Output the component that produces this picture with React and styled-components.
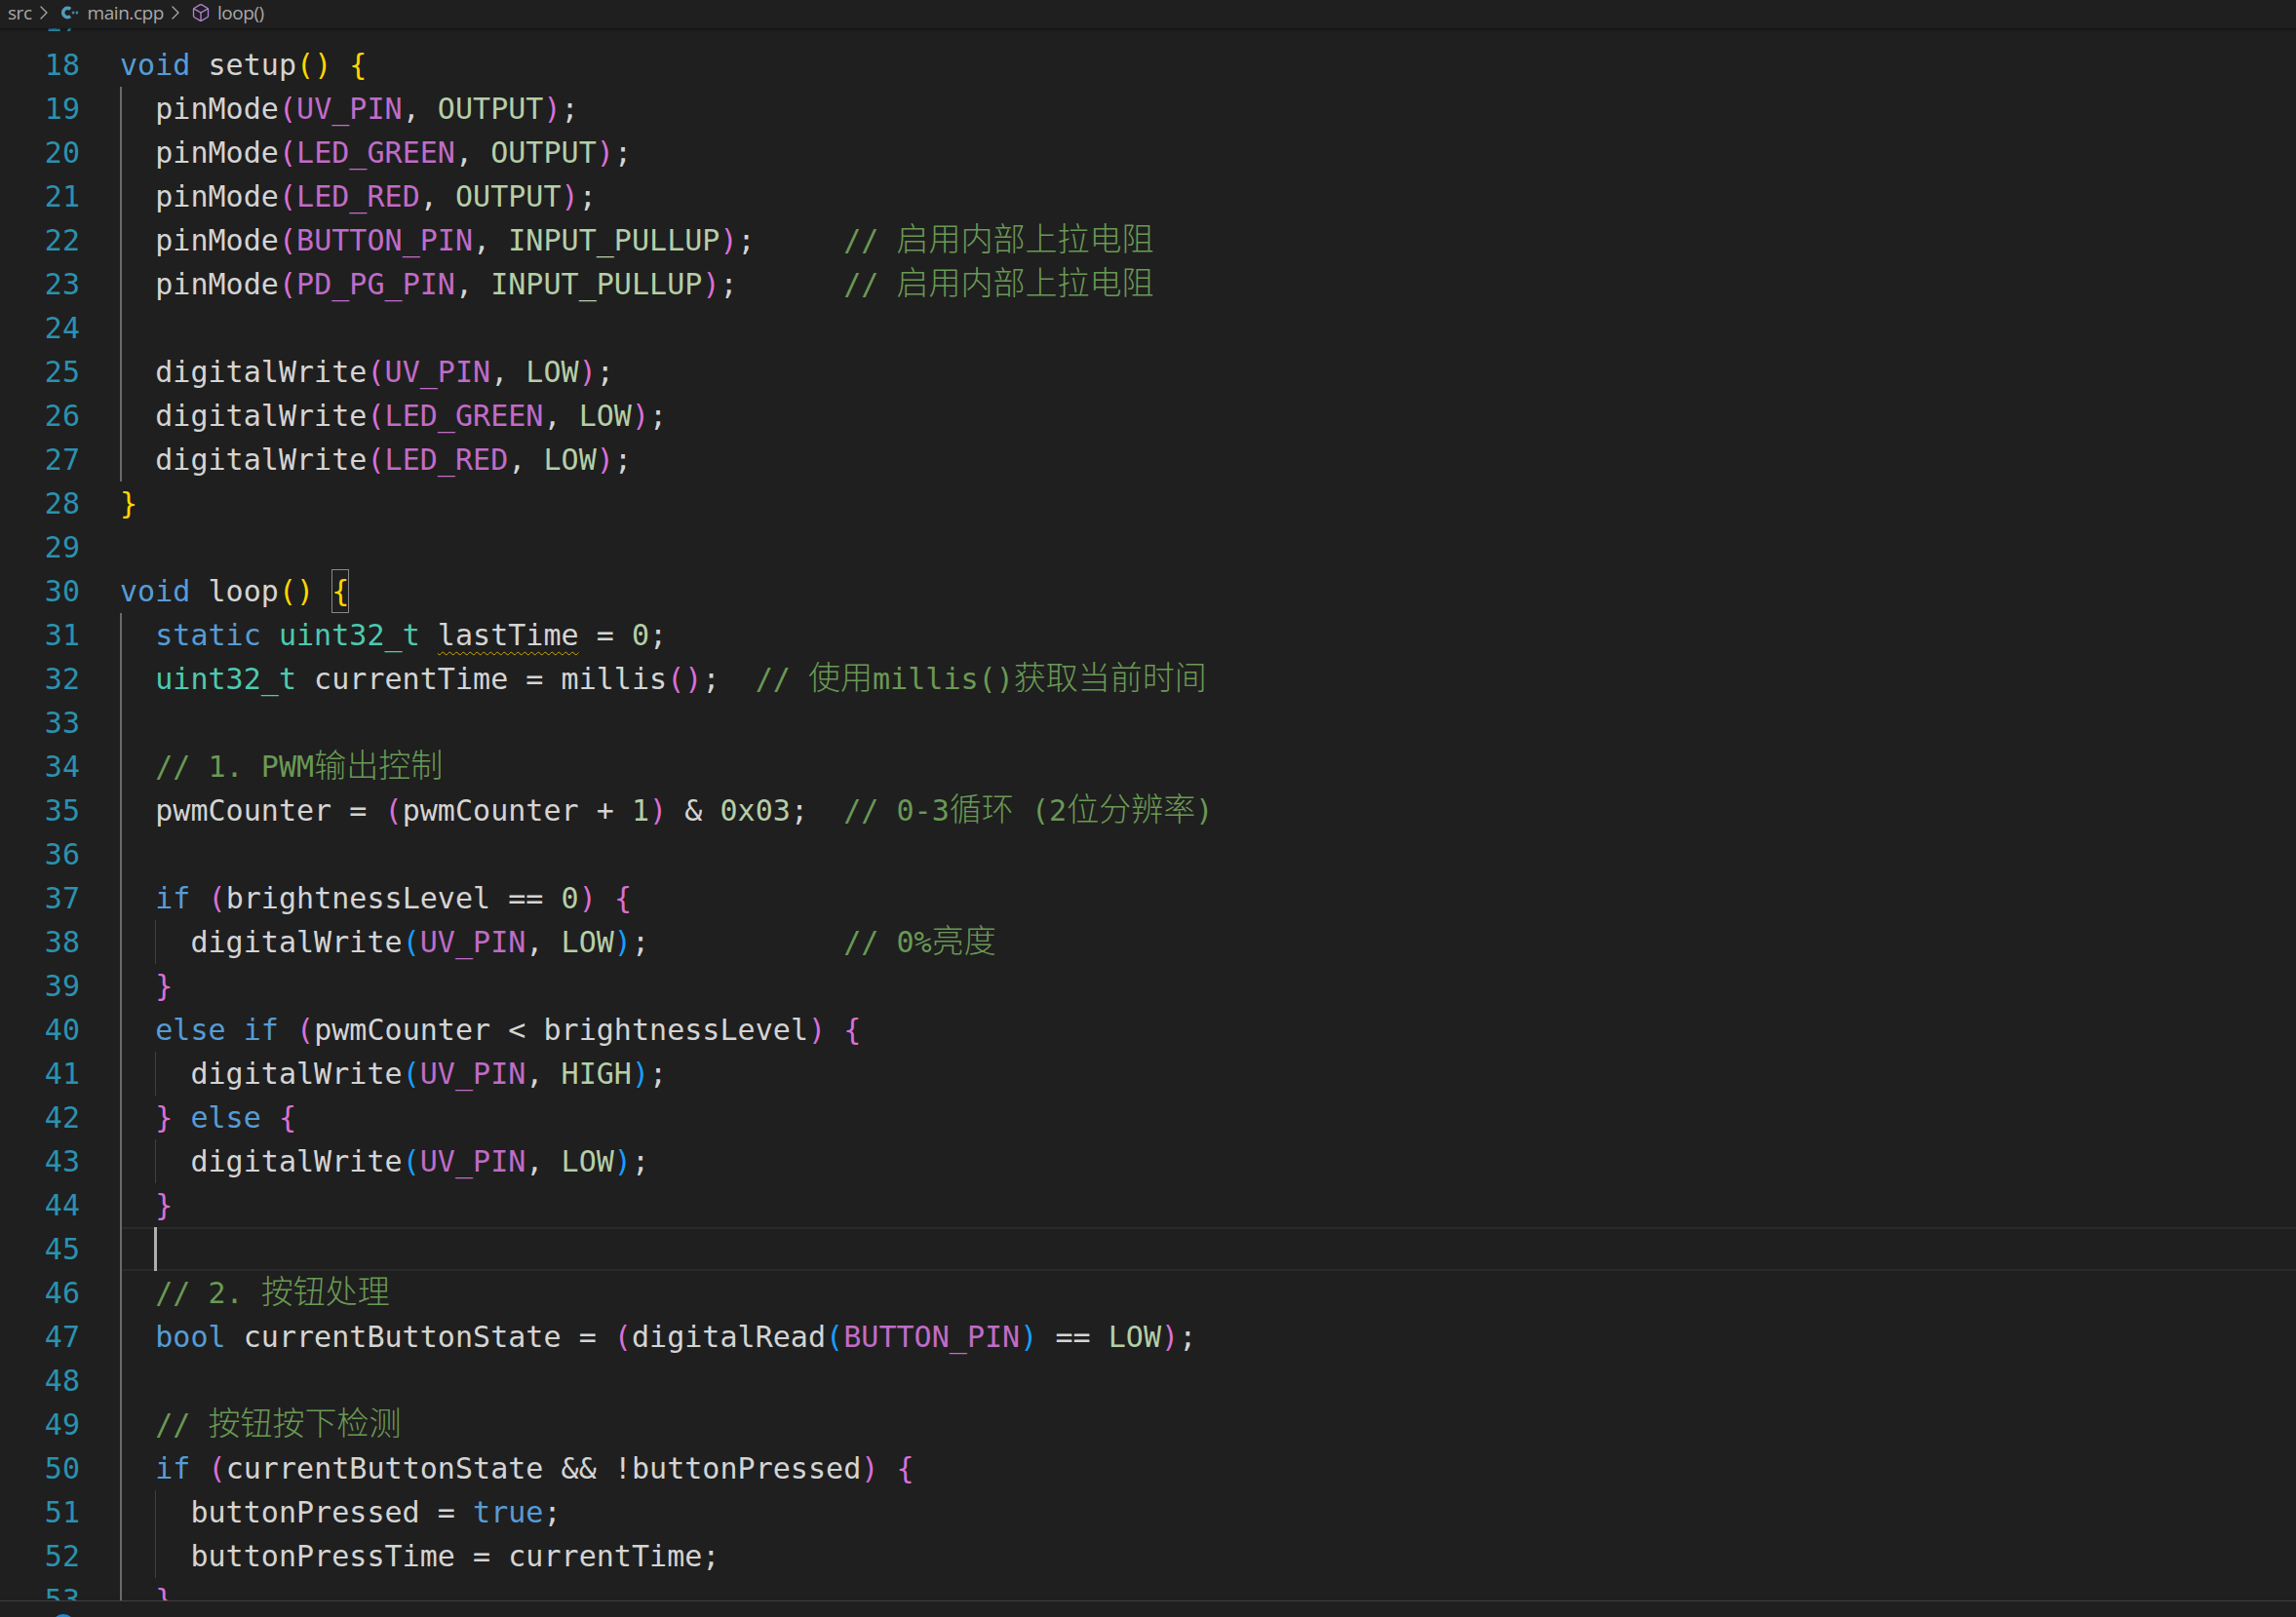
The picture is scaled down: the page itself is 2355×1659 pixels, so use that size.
import React from 'react';
import styled, { createGlobalStyle } from 'styled-components';
import { Box, ChevronRight } from 'lucide-react';

const GlobalStyle = createGlobalStyle`
  html, body {
    margin: 0;
    height: 100%;
    background: #1f1f1f;
  }
  #root {
    height: 100%;
  }
`;

const COLORS = {
  plain: '#d4d4d4',
  key: '#569cd6',
  type: '#4ec9b0',
  macro: '#c06cc8',
  value: '#b5cea8',
  comment: '#6a9955',
  gold: '#ffd700',
  pink: '#da70d6',
  blue: '#179fff',
};

const CJK_RUN = /([\u4e00-\u9fff]+)/;

// short helpers so the table below stays readable
const k = (text) => ['key', text];
const t = (text) => ['type', text];
const m = (text) => ['macro', text];
const v = (text) => ['value', text];
const c = (text) => ['comment', text];
const gold = (text) => ['gold', text];
const pink = (text) => ['pink', text];
const blue = (text) => ['blue', text];

const pinMode = (pin, mode, tail) => ['  pinMode', pink('('), m(pin), ', ', v(mode), pink(')'), ';', ...(tail || [])];
const write = (indent, pin, level, open, close) => [indent + 'digitalWrite', open('('), m(pin), ', ', v(level), close(')'), ';'];

const LINES = [
  { n: 17, code: [] },
  { n: 18, code: [k('void'), ' setup', gold('('), gold(')'), ' ', gold('{')] },
  { n: 19, guides: 1, code: pinMode('UV_PIN', 'OUTPUT') },
  { n: 20, guides: 1, code: pinMode('LED_GREEN', 'OUTPUT') },
  { n: 21, guides: 1, code: pinMode('LED_RED', 'OUTPUT') },
  { n: 22, guides: 1, code: pinMode('BUTTON_PIN', 'INPUT_PULLUP', ['     ', c('// 启用内部上拉电阻')]) },
  { n: 23, guides: 1, code: pinMode('PD_PG_PIN', 'INPUT_PULLUP', ['      ', c('// 启用内部上拉电阻')]) },
  { n: 24, guides: 1, code: [] },
  { n: 25, guides: 1, code: write('  ', 'UV_PIN', 'LOW', pink, pink) },
  { n: 26, guides: 1, code: write('  ', 'LED_GREEN', 'LOW', pink, pink) },
  { n: 27, guides: 1, code: write('  ', 'LED_RED', 'LOW', pink, pink) },
  { n: 28, code: [gold('}')] },
  { n: 29, code: [] },
  { n: 30, code: [k('void'), ' loop', gold('('), gold(')'), ' ', ['match', '{']] },
  { n: 31, guides: 1, code: ['  ', k('static'), ' ', t('uint32_t'), ' ', ['warn', 'lastTime'], ' = ', v('0'), ';'] },
  { n: 32, guides: 1, code: ['  ', t('uint32_t'), ' currentTime = millis', pink('('), pink(')'), ';  ', c('// 使用millis()获取当前时间')] },
  { n: 33, guides: 1, code: [] },
  { n: 34, guides: 1, code: ['  ', c('// 1. PWM输出控制')] },
  { n: 35, guides: 1, code: ['  pwmCounter = ', pink('('), 'pwmCounter + ', v('1'), pink(')'), ' & ', v('0x03'), ';  ', c('// 0-3循环 (2位分辨率)')] },
  { n: 36, guides: 1, code: [] },
  { n: 37, guides: 1, code: ['  ', k('if'), ' ', pink('('), 'brightnessLevel == ', v('0'), pink(')'), ' ', pink('{')] },
  { n: 38, guides: 2, code: [...write('    ', 'UV_PIN', 'LOW', blue, blue), '           ', c('// 0%亮度')] },
  { n: 39, guides: 1, code: ['  ', pink('}')] },
  { n: 40, guides: 1, code: ['  ', k('else'), ' ', k('if'), ' ', pink('('), 'pwmCounter < brightnessLevel', pink(')'), ' ', pink('{')] },
  { n: 41, guides: 2, code: write('    ', 'UV_PIN', 'HIGH', blue, blue) },
  { n: 42, guides: 1, code: ['  ', pink('}'), ' ', k('else'), ' ', pink('{')] },
  { n: 43, guides: 2, code: write('    ', 'UV_PIN', 'LOW', blue, blue) },
  { n: 44, guides: 1, code: ['  ', pink('}')] },
  { n: 45, guides: 1, active: true, code: [] },
  { n: 46, guides: 1, code: ['  ', c('// 2. 按钮处理')] },
  { n: 47, guides: 1, code: ['  ', k('bool'), ' currentButtonState = ', pink('('), 'digitalRead', blue('('), m('BUTTON_PIN'), blue(')'), ' == ', v('LOW'), pink(')'), ';'] },
  { n: 48, guides: 1, code: [] },
  { n: 49, guides: 1, code: ['  ', c('// 按钮按下检测')] },
  { n: 50, guides: 1, code: ['  ', k('if'), ' ', pink('('), 'currentButtonState && !buttonPressed', pink(')'), ' ', pink('{')] },
  { n: 51, guides: 2, code: ['    buttonPressed = ', k('true'), ';'] },
  { n: 52, guides: 2, code: ['    buttonPressTime = currentTime;'] },
  { n: 53, guides: 1, code: ['  ', pink('}')] },
];

const Page = styled.div`
  height: 100vh;
  display: flex;
  flex-direction: column;
  overflow: hidden;
  background: #1f1f1f;
`;

const Breadcrumbs = styled.nav`
  position: relative;
  z-index: 2;
  flex: 0 0 29px;
  display: flex;
  align-items: center;
  padding: 0 0 3px 8px;
  box-sizing: border-box;
  background: #1f1f1f;
  box-shadow: 0 1px 3px rgba(0, 0, 0, 0.55);
  font-family: 'Open Sans', 'Liberation Sans', sans-serif;
  font-size: 19px;
  letter-spacing: -0.45px;
  color: #a9a9a9;
`;

const Crumb = styled.span`
  margin-left: ${({ $gap }) => $gap || 0}px;
`;

const Chevron = styled(ChevronRight)`
  margin: 0 -3px 0 0;
  color: #a9a9a9;
  flex: none;
`;

const CrumbIcon = styled.svg`
  flex: none;
  margin-left: ${({ $gap }) => $gap}px;
`;

const CubeIcon = styled(Box)`
  flex: none;
  margin-left: 7px;
  color: #b180d7;
`;

const Editor = styled.main`
  flex: 1;
  min-height: 0;
  overflow: hidden;
`;

// scrolled so that line 17 is nearly out of sight under the breadcrumbs
const Scroller = styled.div`
  margin-top: -30px;
  font-family: 'DejaVu Sans Mono', 'Noto Sans CJK SC', monospace;
  font-size: 30px;
  letter-spacing: 0.04px;
`;

const Row = styled.div`
  display: flex;
  height: 45px;
  line-height: 45px;
`;

const LineNumber = styled.span`
  flex: 0 0 123px;
  box-sizing: border-box;
  padding-right: 41px;
  text-align: right;
  color: #2b91af;
`;

const CodeCell = styled.div`
  position: relative;
  flex: 1;
  box-sizing: border-box;
  white-space: pre;
  color: ${COLORS.plain};
  border-top: 2px solid ${({ $active }) => ($active ? '#2a2a2a' : 'transparent')};
  border-bottom: 2px solid ${({ $active }) => ($active ? '#2a2a2a' : 'transparent')};
  line-height: 41px;
`;

const Guide = styled.span`
  position: absolute;
  top: -2px;
  bottom: -2px;
  left: ${({ $level }) => ($level === 1 ? 0 : 36)}px;
  width: ${({ $level }) => ($level === 1 ? 2 : 1)}px;
  background: ${({ $level }) => ($level === 1 ? '#6a6a6a' : '#404040')};
`;

const Caret = styled.span`
  position: absolute;
  top: -2px;
  bottom: -2px;
  left: 35px;
  width: 3px;
  background: #aeafad;
`;

const Token = styled.span`
  color: ${({ $kind }) => COLORS[$kind] || COLORS.plain};
`;

const MatchedBrace = styled.span`
  color: ${COLORS.gold};
  outline: 1px solid #888888;
  outline-offset: -1px;
  display: inline-block;
  height: 45px;
  margin-top: -2px;
  vertical-align: top;
  line-height: 45px;
`;

const Warned = styled.span`
  text-decoration: underline wavy #cca700 1px;
  text-underline-offset: 6px;
`;

const Cjk = styled.span`
  font-family: 'Noto Sans CJK SC', sans-serif;
  font-size: 33px;
  font-weight: 300;
  line-height: 0;
  letter-spacing: 0;
`;

const StatusStrip = styled.footer`
  flex: 0 0 17px;
  box-sizing: border-box;
  border-top: 1px solid #404040;
  overflow: hidden;
  padding: 13px 0 0 53px;
  background: #1f1f1f;
`;

const StatusDot = styled.span`
  display: block;
  width: 24px;
  height: 24px;
  border-radius: 50%;
  background: #1a8ad4;
`;

const CommentText = ({ text }) => (
  <Token $kind="comment">
    {text.split(CJK_RUN).map((part, i) => (CJK_RUN.test(part) ? <Cjk key={i}>{part}</Cjk> : part))}
  </Token>
);

const renderToken = (token, i) => {
  if (typeof token === 'string') return <React.Fragment key={i}>{token}</React.Fragment>;
  const [kind, text] = token;
  if (kind === 'comment') return <CommentText key={i} text={text} />;
  if (kind === 'match') return <MatchedBrace key={i}>{text}</MatchedBrace>;
  if (kind === 'warn') return <Warned key={i}>{text}</Warned>;
  return <Token key={i} $kind={kind}>{text}</Token>;
};

const CodeLine = ({ line }) => (
  <Row>
    <LineNumber>{line.n}</LineNumber>
    <CodeCell $active={line.active}>
      {line.guides >= 1 && <Guide $level={1} />}
      {line.guides >= 2 && <Guide $level={2} />}
      {line.active && <Caret />}
      {line.code.length ? line.code.map(renderToken) : ' '}
    </CodeCell>
  </Row>
);

const App = () => (
  <Page>
    <GlobalStyle />
    <Breadcrumbs>
      <Crumb>src</Crumb>
      <Chevron size={24} strokeWidth={1.3} />
      <CrumbIcon $gap={9} width="18" height="16" viewBox="0 0 18 16" fill="none">
        <path d="M9.2 4.4A4.6 4.6 0 1 0 9.2 11.6" stroke="#519aba" strokeWidth="3.6" />
        <path d="M10.6 8h3M12.1 6.5v3M14.4 8h3M15.9 6.5v3" stroke="#519aba" strokeWidth="1.2" />
      </CrumbIcon>
      <Crumb $gap={9}>main.cpp</Crumb>
      <Chevron size={24} strokeWidth={1.3} />
      <CubeIcon size={20} strokeWidth={1.6} />
      <Crumb $gap={7}>loop()</Crumb>
    </Breadcrumbs>
    <Editor>
      <Scroller>
        {LINES.map((line) => (
          <CodeLine key={line.n} line={line} />
        ))}
      </Scroller>
    </Editor>
    <StatusStrip>
      <StatusDot />
    </StatusStrip>
  </Page>
);

export default App;
